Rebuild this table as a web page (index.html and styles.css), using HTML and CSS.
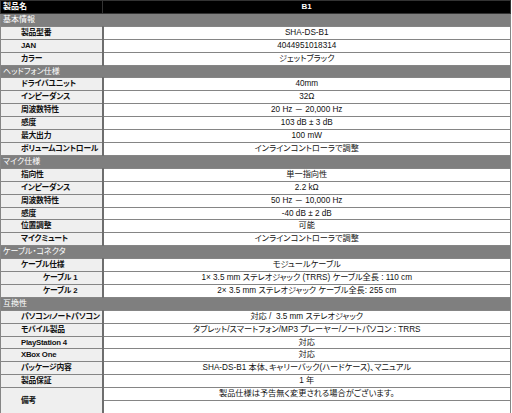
FILE: index.html
```html
<!DOCTYPE html>
<html lang="ja">
<head>
<meta charset="utf-8">
<title>製品仕様</title>
<link rel="stylesheet" href="styles.css">
</head>
<body>
<table class="spec">
  <colgroup><col class="c-lab"><col class="c-val"></colgroup>
  <tr class="head"><td class="h-lab">製品名</td><td class="h-val">B1</td></tr>
  <tr class="sec"><td colspan="2">基本情報</td></tr>
  <tr><td class="lab">製品型番</td><td class="val">SHA-DS-B1</td></tr>
  <tr><td class="lab">JAN</td><td class="val">4044951018314</td></tr>
  <tr><td class="lab">カラー</td><td class="val">ジェットブラック</td></tr>
  <tr class="sec"><td colspan="2">ヘッドフォン仕様</td></tr>
  <tr><td class="lab">ドライバユニット</td><td class="val">40mm</td></tr>
  <tr><td class="lab">インピーダンス</td><td class="val">32Ω</td></tr>
  <tr><td class="lab">周波数特性</td><td class="val">20 Hz － 20,000 Hz</td></tr>
  <tr><td class="lab">感度</td><td class="val">103 dB ± 3 dB</td></tr>
  <tr><td class="lab">最大出力</td><td class="val">100 mW</td></tr>
  <tr><td class="lab">ボリュームコントロール</td><td class="val">インラインコントローラで調整</td></tr>
  <tr class="sec"><td colspan="2">マイク仕様</td></tr>
  <tr><td class="lab">指向性</td><td class="val">単一指向性</td></tr>
  <tr><td class="lab">インピーダンス</td><td class="val">2.2 kΩ</td></tr>
  <tr><td class="lab">周波数特性</td><td class="val">50 Hz － 10,000 Hz</td></tr>
  <tr><td class="lab">感度</td><td class="val">-40 dB ± 2 dB</td></tr>
  <tr><td class="lab">位置調整</td><td class="val">可能</td></tr>
  <tr><td class="lab">マイクミュート</td><td class="val">インラインコントローラで調整</td></tr>
  <tr class="sec"><td colspan="2">ケーブル・コネクタ</td></tr>
  <tr><td class="lab">ケーブル仕様</td><td class="val">モジュールケーブル</td></tr>
  <tr><td class="lab sub">ケーブル 1</td><td class="val">1× 3.5 mm ステレオジャック (TRRS) ケーブル全長 : 110 cm</td></tr>
  <tr><td class="lab sub">ケーブル 2</td><td class="val">2× 3.5 mm ステレオジャック ケーブル全長: 255 cm</td></tr>
  <tr class="sec"><td colspan="2">互換性</td></tr>
  <tr><td class="lab">パソコン/ノートパソコン</td><td class="val">対応 /&nbsp; 3.5 mm ステレオジャック</td></tr>
  <tr><td class="lab">モバイル製品</td><td class="val">タブレット/スマートフォン/MP3 プレーヤー/ノートパソコン : TRRS</td></tr>
  <tr><td class="lab">PlayStation 4</td><td class="val">対応</td></tr>
  <tr><td class="lab">XBox One</td><td class="val">対応</td></tr>
  <tr><td class="lab">パッケージ内容</td><td class="val">SHA-DS-B1 本体、キャリーバック(ハードケース)、マニュアル</td></tr>
  <tr><td class="lab">製品保証</td><td class="val">1 年</td></tr>
  <tr><td class="lab" rowspan="2">備考</td><td class="val">製品仕様は予告無く変更される場合がございます。</td></tr>
  <tr><td class="val"></td></tr>
</table>
</body>
</html>
```
FILE: styles.css
```css
html, body {
  margin: 0;
  padding: 0;
  background: #ffffff;
}
body {
  font-family: "Liberation Sans", "Noto Sans CJK JP", sans-serif;
  font-size: 8px;
  font-feature-settings: "palt";
  color: #111;
}
.spec {
  width: 511px;
  table-layout: fixed;
  border-collapse: collapse;
}
.c-lab { width: 102px; }
.spec td {
  padding: 0;
  height: 11.9px;
  line-height: 11.9px;
  border: 1px solid #858585;
  white-space: nowrap;
}
.head td {
  background: #000;
  color: #fff;
  font-weight: bold;
  border-color: #333;
}
.head .h-lab { padding-left: 2px; }
.head .h-val { text-align: center; }
.sec td {
  background: #7f7f7f;
  color: #fff;
  padding-left: 2px;
}
.spec .lab {
  background: #efefef;
  font-weight: bold;
  font-size: 7.8px;
  letter-spacing: -0.25px;
  padding-left: 20px;
  border-right: 2px solid #6e6e6e;
}
.spec .lab.sub { padding-left: 42px; }
.spec .val {
  text-align: center;
  background: #fff;
  font-size: 8.2px;
}
```
